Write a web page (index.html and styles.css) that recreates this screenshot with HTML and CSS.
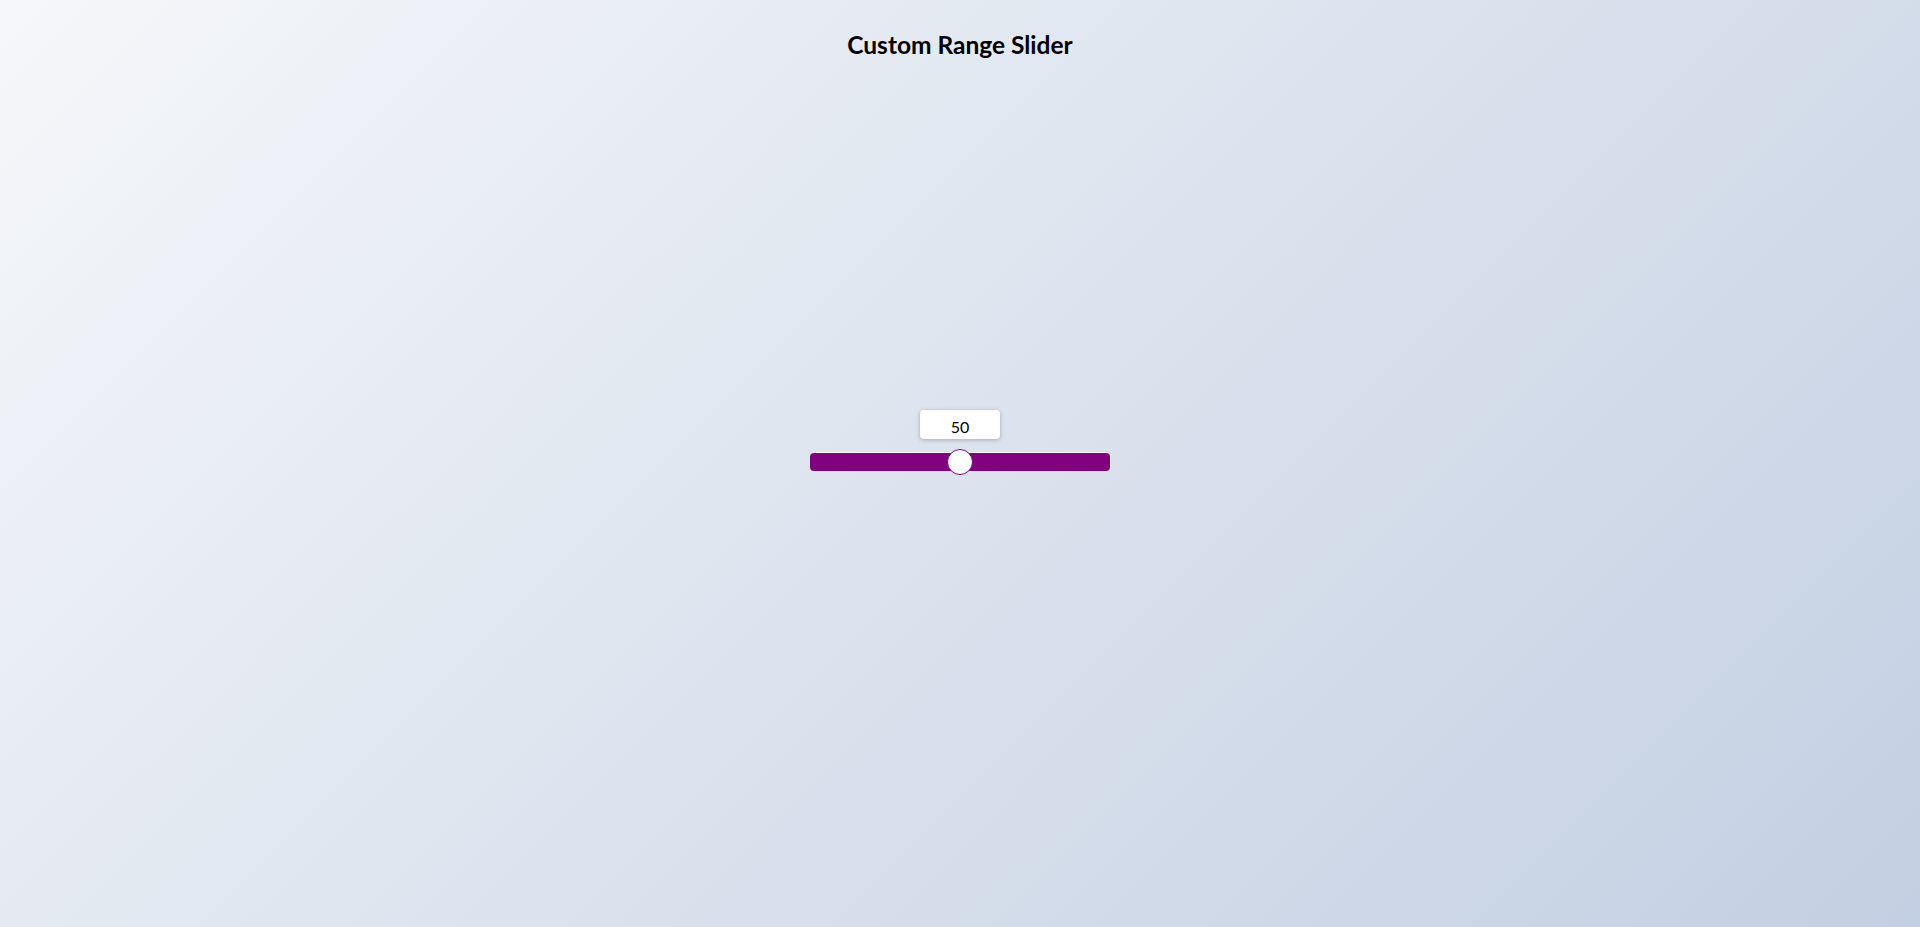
FILE: index.html
```html
<!DOCTYPE html>
<html lang="en">
<head>
<meta charset="utf-8">
<title>Custom Range Slider</title>
<link rel="stylesheet" href="styles.css">
</head>
<body>
  <h1 class="title">Custom Range Slider</h1>
  <div class="range-wrap">
    <output class="bubble">50</output>
    <input class="slider" type="range" min="0" max="100" value="50">
  </div>
</body>
</html>
```
FILE: styles.css
```css
html, body {
  margin: 0;
  padding: 0;
}
body {
  min-height: 100vh;
  display: grid;
  grid-template-rows: 1fr auto 1fr;
  justify-items: center;
  background: linear-gradient(135deg, #f5f7fa 0%, #c3cfe2 100%);
  font-family: Lato, "Liberation Sans", sans-serif;
  color: #000;
}
.title {
  grid-row: 1;
  align-self: start;
  margin: 30px 0 0;
  font-size: 24.5px;
  font-weight: 700;
  line-height: normal;
}
.range-wrap {
  grid-row: 2;
  position: relative;
  width: 300px;
  padding-bottom: 3px;
}
.slider {
  -webkit-appearance: none;
  appearance: none;
  display: block;
  width: 300px;
  height: 18px;
  margin: 0;
  background: #800080;
  border-radius: 4px;
  outline: none;
  box-shadow: 1px -1px 0 rgba(255, 255, 255, 0.7);
}
.slider::-webkit-slider-thumb {
  -webkit-appearance: none;
  appearance: none;
  width: 26px;
  height: 26px;
  border-radius: 50%;
  background: #fff;
  border: 1px solid #800080;
  box-sizing: border-box;
  cursor: pointer;
}
.bubble {
  position: absolute;
  left: 50%;
  bottom: calc(100% + 14px);
  transform: translateX(-50%);
  box-sizing: border-box;
  width: 80px;
  height: 29px;
  padding-top: 3px;
  display: flex;
  align-items: center;
  justify-content: center;
  background: #fff;
  border-radius: 4px;
  box-shadow: 0 1px 4px rgba(0, 0, 0, 0.25);
  font-size: 16px;
  color: #000;
}
```
